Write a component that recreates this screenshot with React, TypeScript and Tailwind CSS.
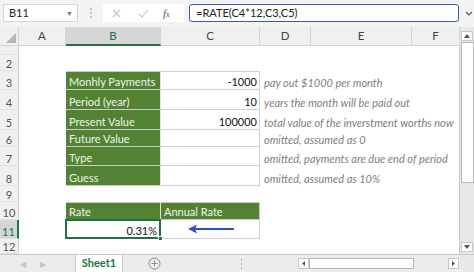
import React from "react";

const FONT = { fontFamily: "Lato, 'Open Sans', sans-serif" };

function RowHead({ n, active }: { n?: string; active?: boolean }) {
  return (
    <div
      className={
        "flex items-end justify-center pb-[1px] text-[11px] leading-none border-b border-[#e2e2e2] " +
        (active
          ? "bg-[#d6d6d6] text-[#217346] border-r-2 border-r-[#217346]"
          : "bg-[#f0f0f0] text-[#555] border-r border-r-[#d4d4d4]")
      }
    >
      {n}
    </div>
  );
}

function Empty() {
  return <div />;
}

function Green({ children, top, right }: { children?: React.ReactNode; top?: boolean; right?: boolean }) {
  return (
    <div
      className={
        "bg-[#548235] text-[#eef4e8] text-[11px] leading-none flex items-end pl-[3px] pb-[2px] whitespace-nowrap border-b border-b-[#c7d0be] " +
        (top ? "border-t border-t-[#c7d0be] " : "") +
        (right ? "border-r border-r-[#c7d0be]" : "border-r border-r-[#dfe6d8]")
      }
    >
      {children}
    </div>
  );
}

function Val({ children, top }: { children?: React.ReactNode; top?: boolean }) {
  return (
    <div
      className={
        "bg-white text-[#111] text-[11px] leading-none flex items-end justify-end pr-[2px] pb-[2px] border-b border-r border-[#d0d0d0] " +
        (top ? "border-t" : "")
      }
    >
      {children}
    </div>
  );
}

function Desc({ children }: { children?: React.ReactNode }) {
  return (
    <div className="col-span-3 flex items-end pl-[4px] pb-[2px] text-[11px] leading-none italic text-[#808080] whitespace-nowrap overflow-visible">
      {children}
    </div>
  );
}

export default function App() {
  const colHeads = [
    { l: "A", w: "" },
    { l: "B", w: "active" },
    { l: "C", w: "" },
    { l: "D", w: "" },
    { l: "E", w: "" },
    { l: "F", w: "" },
  ];
  return (
    <div className="w-[474px] h-[272px] overflow-hidden bg-[#f3f3f3] flex flex-col" style={FONT}>
      {/* formula bar */}
      <div className="h-[27px] flex items-start pt-[4px] relative">
        <div className="ml-[3px] w-[75px] h-[18px] bg-white border border-[#d6d6d6] flex items-center pl-[5px] text-[11px] text-[#222]">
          B11
          <span className="ml-auto mr-[4px] text-[7px] text-[#777]">▼</span>
        </div>
        <div className="w-[25px] flex flex-col items-center justify-center h-[18px] gap-[2px]">
          <span className="w-[2px] h-[2px] bg-[#c0c0c0]" />
          <span className="w-[2px] h-[2px] bg-[#c0c0c0]" />
          <span className="w-[2px] h-[2px] bg-[#c0c0c0]" />
        </div>
        <div className="w-[81px] h-[18px] bg-white flex items-center">
          <svg width="9" height="9" viewBox="0 0 9 9" className="ml-[9px]">
            <path d="M1 1 L8 8 M8 1 L1 8" stroke="#c4c4c4" strokeWidth="1.1" />
          </svg>
          <svg width="11" height="9" viewBox="0 0 11 9" className="ml-[17px]">
            <path d="M1 5 L4 8 L10 1" stroke="#c4c4c4" strokeWidth="1.1" fill="none" />
          </svg>
          <span className="ml-[14px] text-[11px] italic text-[#555]" style={{ fontFamily: "'Liberation Serif', serif" }}>
            f<span className="text-[8px]">x</span>
          </span>
        </div>
        <div className="ml-[5px] w-[270px] h-[18px] bg-white border-[1.5px] border-[#3a5ba8] rounded-[3px] flex items-center pl-[6px] text-[11px] text-[#222]">
          =RATE(C4*12,C3,C5)
        </div>
        <svg width="8" height="6" viewBox="0 0 8 6" className="ml-[6px] mt-[7px]">
          <path d="M1 1 L4 4 L7 1" stroke="#555" strokeWidth="1.2" fill="none" />
        </svg>
      </div>

      {/* sheet area */}
      <div className="flex h-[227px]">
        <div
          className="w-[460px] bg-white grid grid-cols-[19px_47px_95px_99px_51px_101px_48px] grid-rows-[19px_9px_16px_19px_20px_20px_17px_19px_20px_16px_18px_19px_15px] border-r border-[#c8c8c8]"
        >
          {/* header row */}
          <div className="bg-[#f0f0f0] border-r border-b border-[#d4d4d4] flex items-end justify-end p-[2px]">
            <svg width="10" height="10" viewBox="0 0 10 10">
              <path d="M10 0 L10 10 L0 10 Z" fill="#b4b4b4" />
            </svg>
          </div>
          {colHeads.map((c) => (
            <div
              key={c.l}
              className={
                "flex items-center justify-center text-[11.5px] border-r border-[#d4d4d4] " +
                (c.w
                  ? "bg-[#d6d6d6] text-[#217346] border-b-2 border-b-[#217346]"
                  : "bg-[#f0f0f0] text-[#444] border-b border-b-[#d4d4d4]")
              }
            >
              {c.l}
            </div>
          ))}

          {/* row 1 */}
          <RowHead />
          <Empty /><Empty /><Empty /><Empty /><Empty /><Empty />
          {/* row 2 */}
          <RowHead n="2" />
          <Empty /><Empty /><Empty /><Empty /><Empty /><Empty />
          {/* row 3 */}
          <RowHead n="3" />
          <Empty />
          <Green top>Monhly Payments</Green>
          <Val top>-1000</Val>
          <Desc>pay out $1000 per month</Desc>
          {/* row 4 */}
          <RowHead n="4" />
          <Empty />
          <Green>Period (year)</Green>
          <Val>10</Val>
          <Desc>years the month will be paid out</Desc>
          {/* row 5 */}
          <RowHead n="5" />
          <Empty />
          <Green>Present Value</Green>
          <Val>100000</Val>
          <Desc>total value of the inverstment worths now</Desc>
          {/* row 6 */}
          <RowHead n="6" />
          <Empty />
          <Green>Future Value</Green>
          <Val />
          <Desc>omitted, assumed as 0</Desc>
          {/* row 7 */}
          <RowHead n="7" />
          <Empty />
          <Green>Type</Green>
          <Val />
          <Desc>omitted, payments are due end of period</Desc>
          {/* row 8 */}
          <RowHead n="8" />
          <Empty />
          <Green>Guess</Green>
          <Val />
          <Desc>omitted, assumed as 10%</Desc>
          {/* row 9 */}
          <RowHead n="9" />
          <Empty /><Empty /><Empty /><Empty /><Empty /><Empty />
          {/* row 10 */}
          <RowHead n="10" />
          <Empty />
          <Green top>Rate</Green>
          <Green top right>Annual Rate</Green>
          <Empty /><Empty /><Empty />
          {/* row 11 */}
          <RowHead n="11" active />
          <Empty />
          <div className="relative bg-white border-2 border-[#217346] -ml-[1px] -mt-[1px] text-[11px] text-[#111] leading-none flex items-end justify-end pr-[2px] pb-[1px]">
            0.31%
            <span className="absolute -right-[4px] -bottom-[4px] w-[5px] h-[5px] bg-[#217346] border border-white" />
          </div>
          <div className="bg-white border-b border-r border-[#d0d0d0] flex items-center">
            <svg width="48" height="10" viewBox="0 0 48 10" className="ml-[27px]">
              <path d="M3 5 L46 5" stroke="#2d4fb5" strokeWidth="2" />
              <path d="M0 5 L9 0.5 L7 5 L9 9.5 Z" fill="#2d4fb5" />
            </svg>
          </div>
          <Empty /><Empty /><Empty />
          {/* row 12 */}
          <RowHead n="12" />
          <Empty /><Empty /><Empty /><Empty /><Empty /><Empty />
        </div>

        {/* vertical scrollbar */}
        <div className="w-[14px] bg-[#e8e8e8] flex flex-col pt-[4px]">
          <div className="h-[10px] mx-[1px] bg-white border border-[#c8c8c8] flex items-center justify-center">
            <svg width="6" height="4" viewBox="0 0 6 4"><path d="M0 4 L3 0 L6 4 Z" fill="#555" /></svg>
          </div>
          <div className="h-[141px] ml-[1px] mt-[1px] bg-white border border-[#b8b8b8]" />
          <div className="mt-auto mb-[2px] h-[10px] mx-[1px] bg-white border border-[#c8c8c8] flex items-center justify-center">
            <svg width="6" height="4" viewBox="0 0 6 4"><path d="M0 0 L3 4 L6 0 Z" fill="#555" /></svg>
          </div>
        </div>
      </div>

      {/* tab bar */}
      <div className="h-[18px] flex items-stretch bg-[#ececec] border-t border-[#c8c8c8]">
        <div className="w-[75px] flex items-center text-[8px] text-[#c4c4c4]">
          <span className="ml-[20px]">◀</span>
          <span className="ml-[14px]">▶</span>
        </div>
        <div className="w-[48px] bg-white border-x border-[#c8c8c8] flex items-center justify-center text-[11px] font-bold text-[#217346]">
          Sheet1
        </div>
        <div className="w-[62px] flex items-center justify-center">
          <svg width="13" height="13" viewBox="0 0 13 13">
            <circle cx="6.5" cy="6.5" r="5.5" stroke="#8a8a8a" strokeWidth="1" fill="none" />
            <path d="M6.5 3.5 V9.5 M3.5 6.5 H9.5" stroke="#8a8a8a" strokeWidth="1" />
          </svg>
        </div>
        <div className="w-[112px] flex flex-col items-center justify-center gap-[2px]">
          <span className="w-[1px] h-[2px] bg-[#b0b0b0]" />
          <span className="w-[1px] h-[2px] bg-[#b0b0b0]" />
          <span className="w-[1px] h-[2px] bg-[#b0b0b0]" />
        </div>
        <div className="flex items-center w-[163px] pl-[1px]">
          <div className="w-[11px] h-[11px] bg-white border border-[#c8c8c8] flex items-center justify-center">
            <svg width="3" height="5" viewBox="0 0 3 5"><path d="M3 0 L0 2.5 L3 5 Z" fill="#555" /></svg>
          </div>
          <div className="w-[105px] h-[11px] bg-white border border-[#b8b8b8]" />
          <div className="ml-auto mr-[1px] w-[11px] h-[11px] bg-white border border-[#c8c8c8] flex items-center justify-center">
            <svg width="3" height="5" viewBox="0 0 3 5"><path d="M0 0 L3 2.5 L0 5 Z" fill="#555" /></svg>
          </div>
        </div>
        <div className="w-[14px] bg-[#e8e8e8]" />
      </div>
    </div>
  );
}
